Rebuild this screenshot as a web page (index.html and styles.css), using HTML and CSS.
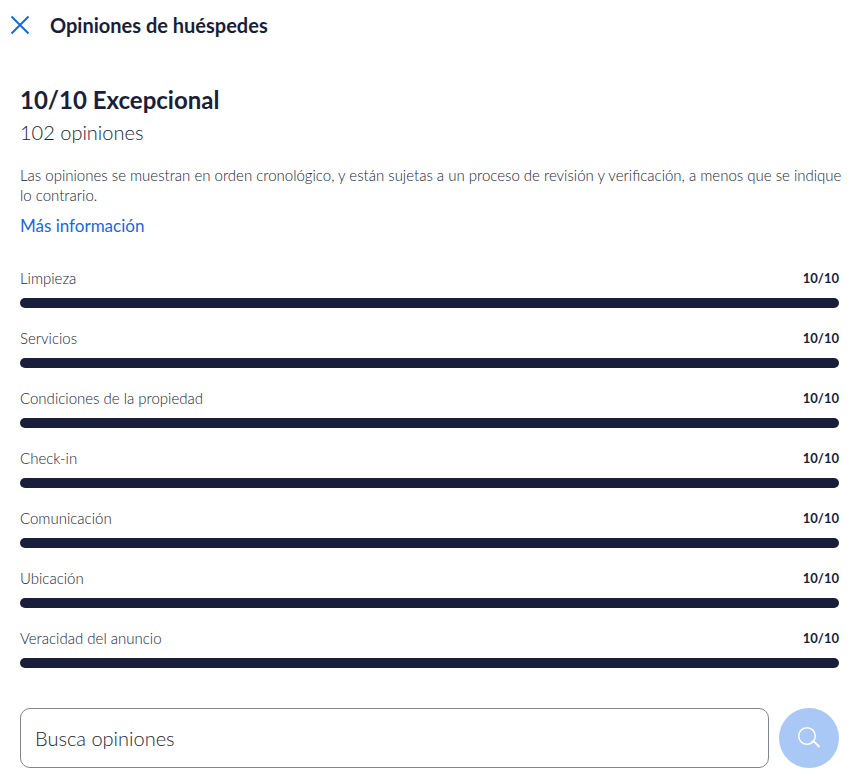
FILE: index.html
```html
<!DOCTYPE html>
<html lang="es">
  <head>
    <meta charset="UTF-8" />
    <meta name="viewport" content="width=device-width, initial-scale=1.0" />
    <title>Opiniones de huéspedes</title>
    <link rel="stylesheet" href="styles.css">
  </head>
  <body>
    <header class="toolbar">
      <button type="button" class="close-btn" aria-label="Cerrar">
        <svg width="20" height="20" viewBox="0 0 20 20" fill="none" stroke="currentColor" stroke-width="2">
          <path d="M1.5 1.5l17 17M18.5 1.5l-17 17" />
        </svg>
      </button>
      <h1>Opiniones de huéspedes</h1>
    </header>

    <main class="content">
      <section class="summary">
        <h2>10/10 Excepcional</h2>
        <p class="count">102 opiniones</p>
        <p class="notice">
          Las opiniones se muestran en orden cronológico, y están sujetas a un
          proceso de revisión y verificación, a menos que se indique lo contrario.
        </p>
        <a href="#" class="more-link">Más información</a>
      </section>

      <section class="ratings">
        <div class="rating">
          <label for="limpieza">Limpieza</label>
          <span class="score">10/10</span>
          <progress id="limpieza" value="10" max="10"></progress>
        </div>
        <div class="rating">
          <label for="servicios">Servicios</label>
          <span class="score">10/10</span>
          <progress id="servicios" value="10" max="10"></progress>
        </div>
        <div class="rating">
          <label for="condiciones">Condiciones de la propiedad</label>
          <span class="score">10/10</span>
          <progress id="condiciones" value="10" max="10"></progress>
        </div>
        <div class="rating">
          <label for="checkin">Check-in</label>
          <span class="score">10/10</span>
          <progress id="checkin" value="10" max="10"></progress>
        </div>
        <div class="rating">
          <label for="comunicacion">Comunicación</label>
          <span class="score">10/10</span>
          <progress id="comunicacion" value="10" max="10"></progress>
        </div>
        <div class="rating">
          <label for="ubicacion">Ubicación</label>
          <span class="score">10/10</span>
          <progress id="ubicacion" value="10" max="10"></progress>
        </div>
        <div class="rating">
          <label for="veracidad">Veracidad del anuncio</label>
          <span class="score">10/10</span>
          <progress id="veracidad" value="10" max="10"></progress>
        </div>
      </section>

      <form class="search">
        <input type="text" class="search-input" placeholder="Busca opiniones" aria-label="Busca opiniones" />
        <button type="submit" class="search-btn" aria-label="Buscar">
          <svg width="24" height="24" viewBox="0 0 24 24" fill="none" stroke="currentColor" stroke-width="1.5">
            <circle cx="10" cy="10" r="8.3" />
            <path d="M15.500 17v-1.5h1.5l5.500 5.500" stroke-width="1.8" />
          </svg>
        </button>
      </form>
    </main>
  </body>
</html>
```
FILE: styles.css
```css
* {
  box-sizing: border-box;
}
body {
  font-family: Lato, "Open Sans", sans-serif;
  font-weight: 300;
  color: #191e3b;
  margin: 0;
  background-color: white;
}
h1,
h2,
p {
  margin: 0;
}
.toolbar {
  display: flex;
  align-items: center;
  gap: 20px;
  padding: 9px 10px 11px;
}
.toolbar h1 {
  font-size: 20px;
  line-height: 32px;
  font-weight: 700;
}
.close-btn {
  display: flex;
  padding: 0;
  border: none;
  background: none;
  color: #1668e3;
  cursor: pointer;
}
.content {
  padding: 32px 0 8px;
}
.summary {
  padding: 0 8px 0 20px;
}
.summary h2 {
  font-size: 24px;
  line-height: 32px;
  font-weight: 700;
}
.count {
  font-size: 20px;
  line-height: 32px;
}
.notice {
  margin-top: 17px;
  font-size: 15px;
  line-height: 20px;
}
.more-link {
  display: inline-block;
  margin-top: 9px;
  font-size: 17px;
  line-height: 24px;
  font-weight: 400;
  color: #1668e3;
  text-decoration: none;
}
.more-link:hover {
  text-decoration: underline;
}
.ratings {
  display: grid;
  gap: 20px;
  margin-top: 30px;
  padding: 0 16px 0 20px;
}
.rating {
  display: grid;
  grid-template-columns: 1fr auto;
  row-gap: 10px;
  font-size: 15px;
  line-height: 20px;
}
.score {
  font-size: 13px;
  font-weight: 700;
}
progress {
  grid-column: 1 / -1;
  appearance: none;
  display: block;
  width: 100%;
  height: 10px;
  border: none;
  border-radius: 5px;
  overflow: hidden;
}
progress::-webkit-progress-bar {
  background-color: #dfe0e4;
}
progress::-webkit-progress-value {
  background-color: #191e3b;
}
.search {
  display: flex;
  gap: 10px;
  margin-top: 40px;
  padding: 0 16px 0 20px;
}
.search-input {
  flex: 1;
  min-width: 0;
  height: 60px;
  padding: 0 14px;
  border: 1px solid #818494;
  border-radius: 10px;
  font: inherit;
  font-size: 20px;
  color: #191e3b;
}
.search-input::placeholder {
  color: #191e3b;
}
.search-btn {
  display: flex;
  align-items: center;
  justify-content: center;
  width: 60px;
  height: 60px;
  padding: 0;
  border: none;
  border-radius: 50%;
  background-color: #a9c8f5;
  color: white;
  cursor: pointer;
}
```
